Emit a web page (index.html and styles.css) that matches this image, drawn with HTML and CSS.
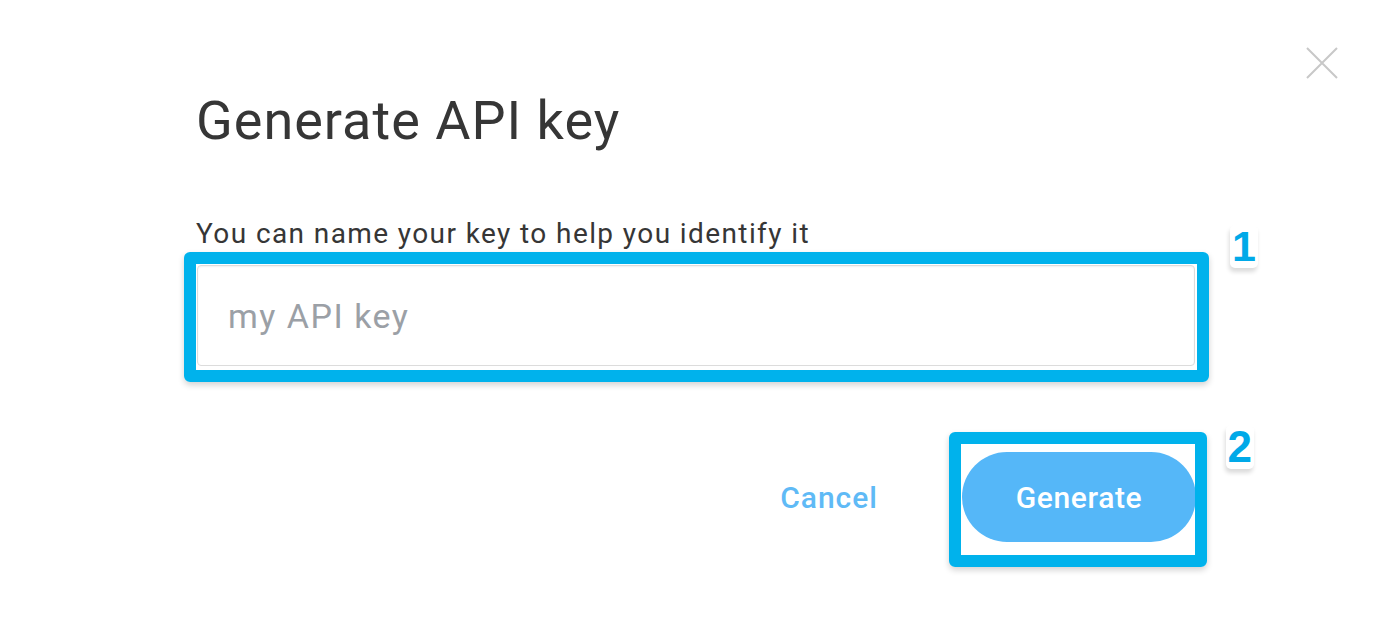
FILE: index.html
```html
<!DOCTYPE html>
<html lang="en">
<head>
  <meta charset="UTF-8" />
  <title>Generate API key</title>
  <link rel="stylesheet" href="styles.css">
</head>
<body>

  <div class="modal">
    <!-- Close -->
    <button class="close" aria-label="Close">
      <svg width="32" height="32" viewBox="0 0 32 32">
        <path d="M1 1 L31 31 M31 1 L1 31" stroke="#c8c8c8" stroke-width="2" fill="none"/>
      </svg>
    </button>

    <div class="modal-body">
      <h1 class="title">Generate API key</h1>

      <label class="label" for="keyName">You can name your key to help you identify it</label>
      <div class="mark mark-input">
        <input type="text" id="keyName" class="key-input" placeholder="my API key" />
        <span class="step step-1">1</span>
      </div>

      <div class="actions">
        <button class="cancel">Cancel</button>
        <div class="mark mark-button">
          <button class="generate">Generate</button>
          <span class="step step-2">2</span>
        </div>
      </div>
    </div>
  </div>

</body>
</html>
```

FILE: styles.css
```css
body {
  margin: 0;
  background: #fff;
  font-family: Roboto, "Liberation Sans", Arial, sans-serif;
  color: #333;
}

.modal {
  position: relative;
  width: 1384px;
  height: 624px;
}

.close {
  position: absolute;
  top: 47px;
  right: 46px;
  padding: 0;
  border: none;
  background: none;
  cursor: pointer;
}

.close svg {
  display: block;
}

.modal-body {
  padding: 89px 188px 0 196px;
}

.title {
  margin: 0;
  font-size: 54px;
  line-height: 64px;
  font-weight: 400;
  letter-spacing: 1px;
  color: #363636;
}

.label {
  display: block;
  margin-top: 64px;
  font-size: 28px;
  line-height: 34px;
  letter-spacing: 1.4px;
  color: #363636;
}

.mark {
  position: relative;
}

.mark::after {
  content: "";
  position: absolute;
  border: 12px solid #00b2ec;
  border-radius: 6px;
  box-shadow: 0 3px 6px rgba(0, 0, 0, 0.18);
  pointer-events: none;
}

.mark-input {
  margin-top: 14px;
  margin-left: 1px;
}

.mark-input::after {
  inset: -13px -13px -16px -13px;
}

.key-input {
  display: block;
  box-sizing: border-box;
  width: 998px;
  height: 101px;
  padding: 0 30px;
  border: 1px solid #dcdcdc;
  border-radius: 4px;
  box-shadow: inset 0 1px 2px rgba(0, 0, 0, 0.06);
  font-family: inherit;
  font-size: 34px;
  letter-spacing: 1.5px;
  color: #333;
  outline: none;
}

.key-input::placeholder {
  color: #9ba0a6;
}

.step {
  position: absolute;
  padding: 0 2px;
  border-radius: 5px;
  background: #fff;
  box-shadow: -1px 4px 4px rgba(0, 0, 0, 0.14);
  font-family: "Liberation Sans", Arial, sans-serif;
  font-weight: 700;
  color: #00a9e8;
  line-height: 1;
}

.step-1 {
  top: -40px;
  right: -62px;
  font-size: 43px;
}

.step-2 {
  top: -27px;
  right: -58px;
  font-size: 44px;
}

.actions {
  display: flex;
  justify-content: flex-end;
  align-items: center;
  gap: 64px;
  margin-top: 86px;
}

.cancel {
  padding: 0 20px;
  border: none;
  background: none;
  font-family: inherit;
  font-size: 30px;
  font-weight: 500;
  letter-spacing: 1px;
  color: #5fbaf6;
  cursor: pointer;
}

.mark-button::after {
  inset: -20px -11px -25px -13px;
}

.generate {
  display: block;
  width: 234px;
  height: 90px;
  border: none;
  border-radius: 45px;
  background: #55b7f8;
  font-family: inherit;
  font-size: 30px;
  font-weight: 500;
  letter-spacing: 0.6px;
  color: #fff;
  cursor: pointer;
}
```
